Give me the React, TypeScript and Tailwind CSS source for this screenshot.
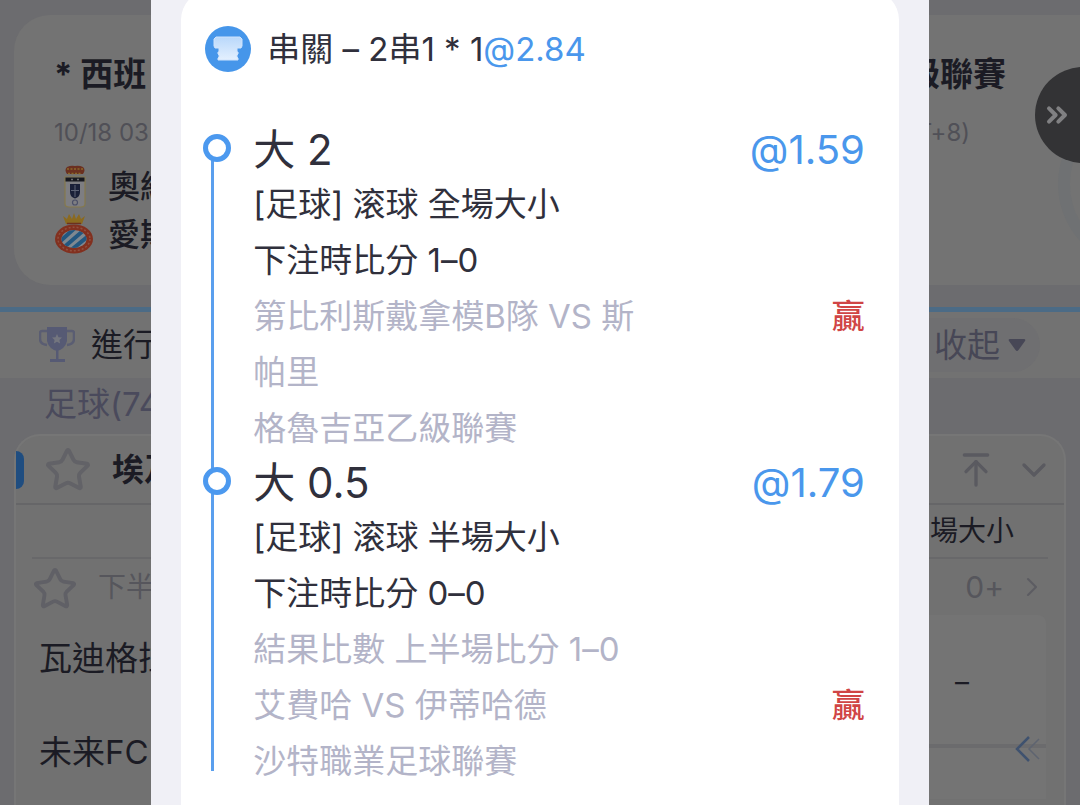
import React from "react";
import {
  ArrowUpToLine,
  ChevronDown,
  ChevronRight,
  ChevronsRight,
  Star,
} from "lucide-react";

interface Leg {
  pick: string;
  odds: string;
  market: string;
  betScore: string;
  details: { text: string; result?: string }[];
}

const LEGS: Leg[] = [
  {
    pick: "大 2",
    odds: "@1.59",
    market: "[足球] 滚球 全場大小",
    betScore: "下注時比分 1–0",
    details: [
      { text: "第比利斯戴拿模B隊 VS 斯帕里", result: "贏" },
      { text: "格魯吉亞乙級聯賽" },
    ],
  },
  {
    pick: "大 0.5",
    odds: "@1.79",
    market: "[足球] 滚球 半場大小",
    betScore: "下注時比分 0–0",
    details: [
      { text: "結果比數 上半場比分 1–0" },
      { text: "艾費哈 VS 伊蒂哈德", result: "贏" },
      { text: "沙特職業足球聯賽" },
    ],
  },
];

function OviedoCrest() {
  return (
    <svg viewBox="0 0 40 44" className="h-11 w-10 shrink-0">
      <path d="M13 9Q10 5 13 2Q17 0 21 1Q25 0 29 2Q32 5 29 9Z" fill="#6b3020" />
      <path d="M13 4h16M14 8.500h14" stroke="#8a6828" strokeWidth="1.500" strokeDasharray="2 1.500" />
      <path d="M11 12h20v27q0 3-4 3H15q-4 0-4-3z" fill="#7e7e82" stroke="#85794c" strokeWidth="1.200" />
      <path d="M11.500 12.500h19v4h-19z" fill="#17181f" />
      <path d="M17 14.500h2M23 14.500h2" stroke="#6b6b70" strokeWidth="1.500" />
      <path d="M16 19h10v8q0 5-5 6.500q-5-1.500-5-6.500z" fill="#1a2038" />
      <path d="M21 20v12M17 25.500h8" stroke="#5c6274" strokeWidth="1" />
      <circle cx="21" cy="37.500" r="2.500" fill="none" stroke="#4c5068" strokeWidth="1.200" />
    </svg>
  );
}

function EspanyolCrest() {
  return (
    <svg viewBox="0 0 40 44" className="h-11 w-10 shrink-0">
      <path d="M12 11 9 3l4 3 2-5 3 5 2-6 2 6 3-5 2 5 4-3-3 8z" fill="#8b6a1f" />
      <path d="M13 10.500h14" stroke="#6b3020" strokeWidth="1.500" />
      <ellipse cx="20" cy="26" rx="19" ry="14.500" fill="#82301f" />
      <ellipse cx="20" cy="26" rx="16" ry="11.800" fill="none" stroke="#8f5040" strokeWidth="1.500" strokeDasharray="2 2" />
      <clipPath id="espanyol-oval">
        <ellipse cx="20" cy="26" rx="12.500" ry="9" />
      </clipPath>
      <g clipPath="url(#espanyol-oval)">
        <path d="M7 17h26v18H7z" fill="#7f8890" />
        <path d="M2 32 22 14M8 36 30 17M16 38 38 20" stroke="#235780" strokeWidth="4" />
      </g>
    </svg>
  );
}

function TrophyIcon() {
  return (
    <svg viewBox="0 0 36 36" className="h-9 w-9 shrink-0">
      <path d="M9 4H3q-2 0-2 2v6q0 5 7 6M27 4h6q2 0 2 2v6q0 5-7 6" fill="none" stroke="#5a5d72" strokeWidth="2.500" />
      <path d="M8 0h20v14q-2 8-10 10q-8-2-10-10z" fill="#565a74" />
      <path d="M17 23h2.500v9H17zM11 32h15v3H11z" fill="#565a74" />
      <path d="m18 7 1.500 3.200 3.500.4-2.600 2.400.7 3.500-3.100-1.700-3.100 1.700.7-3.500-2.600-2.400 3.500-.4z" fill="#74767f" />
    </svg>
  );
}

function JerseyIcon() {
  return (
    <svg viewBox="0 0 46 46" className="h-[46px] w-[46px] shrink-0">
      <defs>
        <linearGradient id="jersey" x1="0" y1="0" x2="0" y2="1">
          <stop offset="0" stopColor="#b9d8fb" />
          <stop offset="1" stopColor="#e4f0fe" />
        </linearGradient>
      </defs>
      <circle cx="23" cy="23" r="23" fill="#4696ea" />
      <path
        d="M11 11H35L37 13V20L36 22H32V26H33V28L32 29V31L33 32V34H13V32L14 31V29L13 28V26H14V22H10L9 20V13Z"
        fill="url(#jersey)"
        stroke="#cfe3fc"
        strokeLinejoin="round"
      />
    </svg>
  );
}

function MatchCard() {
  return (
    <section className="relative ml-3.5 overflow-hidden rounded-l-[36px] bg-[#737373] pt-9 pr-[74px] pb-[26px] pl-10">
      <div className="absolute top-[84px] -right-[148px] h-[170px] w-[170px] rounded-full border-[12px] border-[#6f7173]" />
      <h2 className="flex justify-between text-[33px] leading-[46px] font-bold text-[#1b1b24]">
        <span>* 西班</span>
        <span>級聯賽</span>
      </h2>
      <p className="mt-[18px] flex justify-between pr-9 text-2xl leading-9 text-[#505057]">
        <span>10/18 03</span>
        <span>T+8)</span>
      </p>
      <ul className="mt-3 text-[32px] leading-[48px] font-medium text-[#1b1b24]">
        <li className="flex items-center gap-3.5">
          <OviedoCrest />
          奧維
        </li>
        <li className="flex items-center gap-3.5">
          <EspanyolCrest />
          愛斯
        </li>
      </ul>
    </section>
  );
}

function LiveBar() {
  return (
    <div className="mt-[22px] flex items-center justify-between border-t-[5px] border-[#4b6b86] bg-[#727272] py-1.5 pr-10 pl-[39px]">
      <h2 className="flex items-center gap-4 text-[32px] leading-[54px] text-[#1b1b24]">
        <TrophyIcon />
        進行
      </h2>
      <button className="flex items-center gap-2 rounded-full bg-[#6f6f71] pr-3.5 pl-8 text-[33px] leading-[54px] text-[#474756]">
        收起
        <svg viewBox="0 0 18 14" className="h-3.5 w-[18px]">
          <path d="M2 1h14q2 0 1 2l-6.500 9q-1.500 2-3 0L1 3q-1-2 1-2z" fill="#474756" />
        </svg>
      </button>
    </div>
  );
}

function LeagueCard() {
  return (
    <section className="mx-3.5 flex-1 rounded-t-[26px] border-2 border-b-0 border-[#767676] bg-[#717171] text-[#1b1b24]">
      <header className="flex h-[69px] items-center border-b-2 border-[#666668] pr-2.5">
        <span className="h-[38px] w-2 rounded-r-lg bg-[#1f4d80]" />
        <button aria-label="收藏聯賽" className="ml-5">
          <Star className="h-12 w-12 text-[#626267]" strokeWidth={2} />
        </button>
        <h3 className="ml-5 flex-1 text-[32px] leading-10 font-bold">埃及</h3>
        <button aria-label="置頂" className="mr-[18px]">
          <ArrowUpToLine className="h-10 w-10 text-[#5a5a60]" strokeWidth={2} />
        </button>
        <button aria-label="展開">
          <ChevronDown className="h-10 w-10 text-[#5a5a60]" strokeWidth={2} />
        </button>
      </header>
      <div className="mr-4 ml-4">
        <p className="border-b-2 border-[#68686a] pr-[34px] text-right text-[28px] leading-[52px]">場大小</p>
        <div className="flex h-14 items-center">
          <button aria-label="收藏賽事" className="pt-1">
            <Star className="h-[46px] w-[46px] text-[#606066]" strokeWidth={2} />
          </button>
          <span className="ml-5 flex-1 text-[28px] leading-10 text-[#56565c]">下半</span>
          <a href="#more" className="flex items-center gap-3 text-[30px] leading-10 text-[#56565c]">
            0+
            <ChevronRight className="h-8 w-8 text-[#5c5c62]" strokeWidth={1.5} />
          </a>
        </div>
      </div>
      <div className="flex justify-between pr-[18px] pl-[23px]">
        <div className="-mt-1 text-[33px] leading-[94px]">
          <p>瓦迪格拉</p>
          <p>未来FC</p>
        </div>
        <div className="relative w-[168px] rounded-tr-lg bg-[#747474]">
          <p className="h-[133px] border-b-4 border-[#6b6b6d] text-center text-[28px] leading-[134px]">–</p>
          <button aria-label="收合" className="absolute top-[120px] right-1">
            <svg viewBox="0 0 28 28" className="h-7 w-7" fill="none">
              <path d="M15 2 3 14l12 12" stroke="#3f526f" strokeWidth="2.500" />
              <path d="M25 4 15 14l10 10" stroke="#5e6470" strokeWidth="1.500" />
            </svg>
          </button>
        </div>
      </div>
    </section>
  );
}

function LegItem({ leg }: { leg: Leg }) {
  return (
    <li className="relative mb-px pl-[50px]">
      <span className="absolute top-[10px] left-0 h-7 w-7 rounded-full border-[5px] border-[#4c99ef] bg-white" />
      <div className="flex items-center justify-between text-[42px] leading-[52px]">
        <h3>{leg.pick}</h3>
        <span className="text-[40px] text-[#4a97ec]">{leg.odds}</span>
      </div>
      <p>{leg.market}</p>
      <p>{leg.betScore}</p>
      {leg.details.map((row) => (
        <div key={row.text} className="flex justify-between text-[#b3b4c8]">
          <p className="max-w-[65%]">{row.text}</p>
          {row.result && <span className="font-medium text-[#d04545]">{row.result}</span>}
        </div>
      ))}
    </li>
  );
}

function BetSlip() {
  return (
    <div
      role="dialog"
      aria-label="串關"
      className="absolute inset-y-0 left-[14%] w-[72%] overflow-hidden bg-[#f0f0f6] px-[30px] text-[#30303c]"
    >
      <div className="-mt-2.5 min-h-full rounded-t-[30px] bg-white pt-9 pr-[34px] pb-10 pl-6">
        <h2 className="flex items-center gap-4 text-[33px] leading-[46px]">
          <JerseyIcon />
          <span>
            串關 – 2串1 * 1<span className="text-[#4a97ec]">@2.84</span>
          </span>
        </h2>
        <ul className="relative mt-[52px] -ml-0.5 text-[33px] leading-[56px]">
          <li aria-hidden="true" className="absolute top-6 bottom-[18px] left-2 w-[3px] bg-[#5a9fee]" />
          {LEGS.map((leg) => (
            <LegItem key={leg.market} leg={leg} />
          ))}
        </ul>
      </div>
    </div>
  );
}

export default function App() {
  return (
    <main className="relative flex h-screen flex-col overflow-hidden bg-[#6c6c6f] pt-[15px] font-['Inter','Noto_Sans_CJK_TC',sans-serif] font-normal [font-variant-ligatures:no-contextual]">
      <MatchCard />
      <LiveBar />
      <p className="pt-1 pb-2 pl-11 text-[33px] leading-[44px] text-[#4a4a5c]">足球(74</p>
      <LeagueCard />
      <button
        aria-label="更多"
        className="absolute top-[67px] -right-[51px] flex h-24 w-24 items-center rounded-full bg-[#333335] pl-1.5"
      >
        <ChevronsRight className="h-8 w-8 text-[#808082]" strokeWidth={3} />
      </button>
      <BetSlip />
    </main>
  );
}
